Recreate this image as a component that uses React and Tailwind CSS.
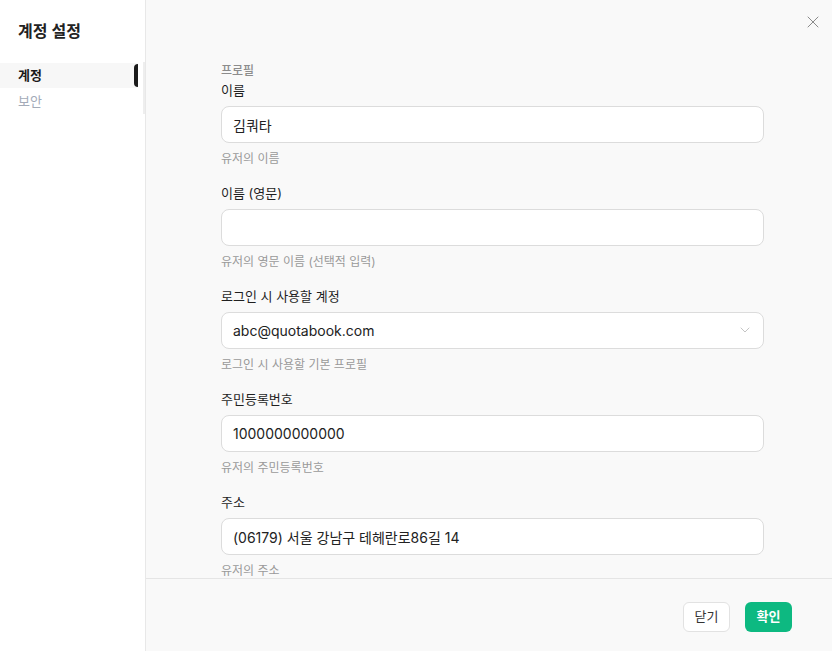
import React, { useState } from 'react';
import { X, ChevronDown } from 'lucide-react';

const font = { fontFamily: 'Inter, "Noto Sans CJK KR", "Noto Sans", sans-serif' };

const fields = [
  { id: 'name', label: '이름', value: '김쿼타', help: '유저의 이름' },
  { id: 'nameEn', label: '이름 (영문)', value: '', help: '유저의 영문 이름 (선택적 입력)' },
  { id: 'login', label: '로그인 시 사용할 계정', value: 'abc@quotabook.com', help: '로그인 시 사용할 기본 프로필', select: true },
  { id: 'rrn', label: '주민등록번호', value: '1000000000000', help: '유저의 주민등록번호' },
  { id: 'address', label: '주소', value: '(06179) 서울 강남구 테헤란로86길 14', help: '유저의 주소' },
];

const Field = ({ field, first }) => (
  <div className={first ? '' : 'mt-[18px]'}>
    <label className="block text-[13px] font-normal text-[#1f1f1f] leading-[16px]">{field.label}</label>
    <div className="relative mt-[8px]">
      <input
        defaultValue={field.value}
        readOnly={field.select}
        className="w-full h-[37px] rounded-lg border border-[#dcdcdc] bg-white px-[11px] text-[14px] text-[#222] outline-none"
        style={font}
      />
      {field.select && (
        <ChevronDown size={16} strokeWidth={1.2} className="absolute right-[11px] top-[10px] text-[#b5b5b5]" />
      )}
    </div>
    <p className="mt-[8px] text-[12px] text-[#9a9a9a] leading-[16px]">{field.help}</p>
  </div>
);

export default function App() {
  const [tab, setTab] = useState('account');

  return (
    <div className="flex w-[832px] h-[651px] bg-white overflow-hidden" style={font}>
      {/* 사이드 메뉴 */}
      <aside className="w-[146px] shrink-0 border-r border-[#e8e8e8] bg-white">
        <h1 className="pl-[18px] pt-[20px] text-[16px] font-semibold text-[#222] leading-[22px]">계정 설정</h1>
        <nav className="mt-[20px] border-r-2 border-[#eeeeee]">
          <button
            onClick={() => setTab('account')}
            className={`relative w-[138px] h-[25px] pl-[18px] text-left text-[13px] ${tab === 'account' ? 'bg-[#f7f7f7] font-semibold text-[#1a1a1a]' : 'text-[#a3abb8]'}`}
          >
            계정
            {tab === 'account' && (
              <span className="absolute right-0 top-[1px] w-[4px] h-[23px] rounded-l-full bg-[#1a1a1a]" />
            )}
          </button>
          <button
            onClick={() => setTab('security')}
            className={`w-[138px] h-[24px] pl-[18px] text-left text-[13px] ${tab === 'security' ? 'font-semibold text-[#1a1a1a]' : 'text-[#a3abb8]'}`}
          >
            보안
          </button>
        </nav>
      </aside>

      {/* 본문 */}
      <main className="relative flex-1 flex flex-col bg-[#f9f9f9]">
        <button className="absolute right-[9px] top-[12px] text-[#8a8a8a]">
          <X size={20} strokeWidth={1.2} />
        </button>

        <div className="flex-1 overflow-hidden pt-[64px] pl-[75px]">
          <div className="w-[543px]">
            <p className="text-[12px] font-medium text-[#8c8c8c] leading-[14px]">프로필</p>
            <div className="mt-[4px]">
              {fields.map((f, i) => (
                <Field key={f.id} field={f} first={i === 0} />
              ))}
            </div>
          </div>
        </div>

        <footer className="h-[73px] shrink-0 border-t border-[#e5e5e5] flex items-start justify-end gap-[15px] pt-[23px] pr-[40px]">
          <button className="h-[30px] w-[47px] rounded-md border border-[#e2e2e2] bg-white text-[13px] text-[#333]">닫기</button>
          <button className="h-[30px] w-[47px] rounded-md bg-[#0db981] text-[13px] font-semibold text-white">확인</button>
        </footer>
      </main>
    </div>
  );
}
